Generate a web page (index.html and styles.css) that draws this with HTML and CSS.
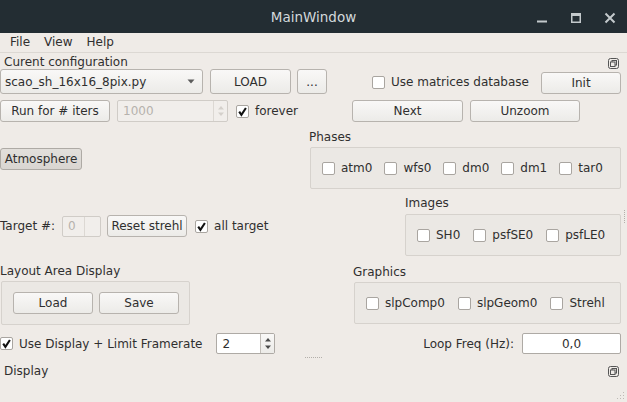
FILE: index.html
```html
<!DOCTYPE html>
<html>
<head>
<meta charset="utf-8">
<title>MainWindow</title>
<link rel="stylesheet" href="styles.css">
</head>
<body>
<header class="titlebar">
  <div></div>
  <div class="title">MainWindow</div>
  <div class="wm-controls">
    <svg class="wm-icon" width="12" height="12" viewBox="0 0 12 12"><rect x="1" y="8.5" width="10" height="2" fill="#c3c9cc"/></svg>
    <svg class="wm-icon" width="12" height="12" viewBox="0 0 12 12"><path d="M1.75 1.75h8.5v8.5h-8.5z" fill="none" stroke="#c3c9cc" stroke-width="1.5"/><rect x="1" y="1" width="10" height="3" fill="#c3c9cc"/></svg>
    <svg class="wm-icon" width="12" height="12" viewBox="0 0 12 12"><path d="M1.5 1.5L10.5 10.5M10.5 1.5L1.5 10.5" stroke="#c3c9cc" stroke-width="2"/></svg>
  </div>
</header>
<nav class="menubar">
  <span class="menu-item">File</span>
  <span class="menu-item">View</span>
  <span class="menu-item">Help</span>
</nav>

<div class="dock-header dock-config">
  <span class="dock-title">Curent configuration</span>
  <svg class="float-icon" width="11" height="11" viewBox="0 0 11 11"><rect x="0.5" y="0.5" width="10" height="10" rx="2" fill="none" stroke="#555" stroke-width="1"/><rect x="4" y="2.5" width="4.5" height="4.5" fill="none" stroke="#555"/><rect x="2.5" y="4" width="4.5" height="4.5" fill="#efebe7" stroke="#555"/></svg>
</div>

<div class="row row-config">
  <div class="combo">
    <span>scao_sh_16x16_8pix.py</span>
    <svg width="8" height="5" viewBox="0 0 8 5"><path d="M0.5 0.5h7L4 4.5z" fill="#5c5c5c"/></svg>
  </div>
  <button class="btn btn-load">LOAD</button>
  <button class="btn btn-dots">...</button>
  <label class="check check-db"><span class="box"></span>Use matrices database</label>
  <button class="btn btn-init">Init</button>
</div>

<div class="row row-run">
  <button class="btn btn-run">Run for # iters</button>
  <div class="spin spin-iters disabled">
    <span class="spin-value">1000</span>
    <span class="spin-arrows"><svg width="8" height="16" viewBox="0 0 8 16"><path d="M1 6.5L4 3L7 6.5z" fill="#d4d0cb"/><path d="M1 9.5L4 13L7 9.5z" fill="#d4d0cb"/></svg></span>
  </div>
  <label class="check check-forever"><span class="box"><svg width="11" height="11" viewBox="0 0 11 11"><path d="M2.2 5.6L4.4 8.8L8.9 2" fill="none" stroke="#111" stroke-width="2.1"/></svg></span>forever</label>
  <div class="nav-buttons">
    <button class="btn btn-next">Next</button>
    <button class="btn btn-unzoom">Unzoom</button>
  </div>
</div>

<div class="mid">
  <div class="mid-left">
    <button class="btn btn-atmos">Atmosphere</button>
    <div class="target-row">
      <span>Target #:</span>
      <div class="spin spin-target disabled">
        <span class="spin-value">0</span>
        <span class="spin-arrows"></span>
      </div>
      <button class="btn btn-reset">Reset strehl</button>
      <label class="check check-all"><span class="box"><svg width="11" height="11" viewBox="0 0 11 11"><path d="M2.2 5.6L4.4 8.8L8.9 2" fill="none" stroke="#111" stroke-width="2.1"/></svg></span>all target</label>
    </div>
    <div class="group-label label-layout">Layout Area Display</div>
    <div class="group group-layout">
      <button class="btn btn-small">Load</button>
      <button class="btn btn-small">Save</button>
    </div>
  </div>
  <div class="mid-right">
    <div class="right-stack">
      <div class="group-label label-phases">Phases</div>
      <div class="group group-phases">
        <label class="check"><span class="box"></span>atm0</label>
        <label class="check"><span class="box"></span>wfs0</label>
        <label class="check"><span class="box"></span>dm0</label>
        <label class="check"><span class="box"></span>dm1</label>
        <label class="check"><span class="box"></span>tar0</label>
      </div>
      <div class="group-label label-images">Images</div>
      <div class="group group-images">
        <label class="check"><span class="box"></span>SH0</label>
        <label class="check"><span class="box"></span>psfSE0</label>
        <label class="check"><span class="box"></span>psfLE0</label>
      </div>
      <div class="group-label label-graphics">Graphics</div>
      <div class="group group-graphics">
        <label class="check"><span class="box"></span>slpComp0</label>
        <label class="check"><span class="box"></span>slpGeom0</label>
        <label class="check"><span class="box"></span>Strehl</label>
      </div>
    </div>
    <div class="vsplit"><span class="vdots"></span></div>
  </div>
</div>

<div class="row row-display">
  <label class="check check-use"><span class="box"><svg width="11" height="11" viewBox="0 0 11 11"><path d="M2.2 5.6L4.4 8.8L8.9 2" fill="none" stroke="#111" stroke-width="2.1"/></svg></span>Use Display + Limit Framerate</label>
  <div class="spin spin-rate">
    <span class="spin-value">2</span>
    <span class="spin-arrows active"><svg width="8" height="19" viewBox="0 0 8 19"><path d="M1 7.5L4 4L7 7.5z" fill="#4a4a4a"/><path d="M1 11.5L4 15L7 11.5z" fill="#4a4a4a"/></svg></span>
  </div>
  <div class="freq">
    <span>Loop Freq (Hz):</span>
    <div class="line-edit">0,0</div>
  </div>
</div>

<div class="hsplit"><span class="hdots"></span></div>

<div class="dock-header dock-display">
  <span class="dock-title">Display</span>
  <svg class="float-icon" width="11" height="11" viewBox="0 0 11 11"><rect x="0.5" y="0.5" width="10" height="10" rx="2" fill="none" stroke="#555" stroke-width="1"/><rect x="4" y="2.5" width="4.5" height="4.5" fill="none" stroke="#555"/><rect x="2.5" y="4" width="4.5" height="4.5" fill="#efebe7" stroke="#555"/></svg>
</div>

<div class="grip-row">
  <svg width="9" height="9" viewBox="0 0 9 9" fill="#bdb9b4"><rect x="7" y="1" width="1" height="1"/><rect x="4" y="4" width="1" height="1"/><rect x="7" y="4" width="1" height="1"/><rect x="1" y="7" width="1" height="1"/><rect x="4" y="7" width="1" height="1"/><rect x="7" y="7" width="1" height="1"/></svg>
</div>
</body>
</html>
```
FILE: styles.css
```css
* { box-sizing: border-box; }
html, body {
  margin: 0;
  padding: 0;
}
body {
  width: 627px;
  height: 402px;
  overflow: hidden;
  background: #efebe7;
  color: #2f2f2f;
  font-family: "DejaVu Sans", "Liberation Sans", sans-serif;
  font-size: 12px;
  line-height: 14px;
  display: flex;
  flex-direction: column;
}

/* title bar */
.titlebar {
  height: 33px;
  background: #232d33;
  display: grid;
  grid-template-columns: 1fr auto 1fr;
  align-items: center;
}
.title {
  color: #d3d9dc;
  font-size: 13.5px;
  padding-top: 1px;
}
.wm-controls {
  display: flex;
  justify-content: flex-end;
  align-items: center;
  gap: 22px;
  padding-right: 11px;
  padding-top: 2px;
}
.wm-icon { display: block; }

/* menu */
.menubar {
  height: 20px;
  display: flex;
  align-items: center;
  gap: 14px;
  padding-left: 10px;
  border-bottom: 1px solid #dcd8d3;
  padding-bottom: 1px;
}

/* dock header */
.dock-header {
  display: flex;
  justify-content: space-between;
  padding-left: 4px;
  padding-right: 8px;
}
.float-icon { display: block; }
.dock-config {
  height: 16px;
  align-items: flex-start;
}
.dock-config .dock-title { margin-top: 2px; }
.dock-config .float-icon { margin-top: 5px; }
.dock-display {
  margin-top: 6px;
  height: 14px;
  align-items: center;
}

/* generic rows */
.row {
  display: flex;
  align-items: center;
}
.row-config { height: 25px; }
.row-run { height: 22px; margin-top: 6px; }

/* buttons */
.btn {
  font: inherit;
  color: #2f2f2f;
  height: 22px;
  padding: 0;
  border: 1px solid #b7b3ae;
  border-radius: 3px;
  background: linear-gradient(#f9f8f7, #ecebe8);
  display: flex;
  align-items: center;
  justify-content: center;
}
.btn-load { width: 81px; height: 25px; margin-left: 7px; }
.btn-dots { width: 30px; height: 25px; margin-left: 6px; }
.btn-init { width: 80px; margin-left: auto; margin-right: 6px; align-self: flex-end; }
.btn-run { width: 110px; }
.nav-buttons { display: flex; gap: 7px; margin-left: auto; margin-right: 47px; }
.btn-next { width: 111px; }
.btn-unzoom { width: 110px; }
.btn-atmos {
  width: 82px;
  margin-top: 26px;
  background: linear-gradient(#e2dfdb, #d9d5d1);
  border-color: #aeaaa5;
}
.btn-reset { width: 80px; margin-left: 6px; }
.btn-small { width: 80px; height: 22px; }

/* combo */
.combo {
  width: 203px;
  height: 25px;
  border: 1px solid #b7b3ae;
  border-radius: 3px;
  background: linear-gradient(#f9f8f7, #ecebe8);
  display: flex;
  align-items: center;
  justify-content: space-between;
  padding-left: 4px;
  padding-right: 7px;
}
.combo svg { display: block; }

/* checkbox */
.check {
  display: flex;
  align-items: center;
  gap: 6px;
  white-space: nowrap;
}
.box {
  width: 13px;
  height: 13px;
  border: 1px solid #a9a5a0;
  border-radius: 2px;
  background: #fff;
  display: flex;
  align-items: center;
  justify-content: center;
  flex: none;
}
.box svg { display: block; }
.check-db { margin-left: 45px; margin-top: 1px; }
.check-forever { margin-left: 8px; }
.check-all { margin-left: 8px; }

/* spin boxes */
.spin {
  display: flex;
  border: 1px solid #aeaaa5;
  border-radius: 2px;
  background: #fff;
  overflow: hidden;
}
.spin-value { flex: 1; padding-left: 5px; display: flex; align-items: center; }
.spin-arrows {
  width: 14px;
  border-left: 1px solid #cfcbc6;
  display: flex;
  align-items: center;
  justify-content: center;
}
.spin-arrows svg { display: block; }
.spin-arrows.active { background: linear-gradient(#f9f8f7, #ecebe8); border-left-color: #c2beb9; }
.spin.disabled {
  background: #f1eeeb;
  border-color: #d0ccc7;
  color: #b6b2ad;
}
.spin.disabled .spin-arrows { border-left-color: #dcd8d3; }
.spin-iters { width: 111px; height: 22px; margin-left: 7px; }
.spin-target { width: 39px; height: 21px; margin-left: 7px; }
.spin-target .spin-arrows { width: 16px; }
.spin-rate { width: 59px; height: 21px; margin-left: 14px; }

/* middle section */
.mid {
  display: flex;
  height: 203px;
}
.mid-left {
  width: 305px;
  display: flex;
  flex-direction: column;
  align-items: flex-start;
}
.target-row {
  display: flex;
  align-items: center;
  height: 22px;
  margin-top: 45px;
}
.group-label { height: 14px; }
.label-layout { margin-top: 27px; }
.group {
  border: 1px solid #d6d2cd;
  border-radius: 2px;
  background: #ebe8e4;
  display: flex;
  align-items: center;
  padding-left: 11px;
  gap: 12px;
}
.group-layout {
  width: 189px;
  height: 44px;
  margin-left: 1px;
  margin-top: 3px;
  gap: 6px;
}
.mid-right {
  flex: 1;
  display: flex;
}
.right-stack {
  flex: 1;
  display: flex;
  flex-direction: column;
}
.label-phases { margin-top: 8px; margin-left: 4px; }
.group-phases { margin-top: 3px; margin-left: 5px; height: 42px; }
.label-images { margin-top: 7px; margin-left: 100px; }
.group-images { margin-top: 4px; margin-left: 100px; height: 42px; gap: 13px; }
.label-graphics { margin-top: 9px; margin-left: 48px; }
.group-graphics { margin-top: 3px; margin-left: 49px; height: 42px; gap: 13px; }
.vsplit {
  width: 6px;
  display: flex;
  justify-content: center;
}
.vdots {
  margin-top: 88px;
  height: 13px;
  border-left: 1px dotted #b3afaa;
}

/* bottom row */
.row-display { height: 21px; margin-top: 8px; }
.check-use { gap: 6px; }
.freq {
  margin-left: auto;
  margin-right: 6px;
  display: flex;
  align-items: center;
  gap: 8px;
}
.line-edit {
  width: 99px;
  height: 21px;
  border: 1px solid #aeaaa5;
  border-radius: 2px;
  background: #fff;
  display: flex;
  align-items: center;
  justify-content: center;
}

.hsplit {
  height: 1px;
  margin-top: 3px;
  display: flex;
  justify-content: center;
}
.hdots {
  width: 17px;
  border-top: 1px dotted #b3afaa;
}

.grip-row {
  margin-top: auto;
  display: flex;
  justify-content: flex-end;
  padding: 0 2px 2px 0;
}
.grip-row svg { display: block; }
```
